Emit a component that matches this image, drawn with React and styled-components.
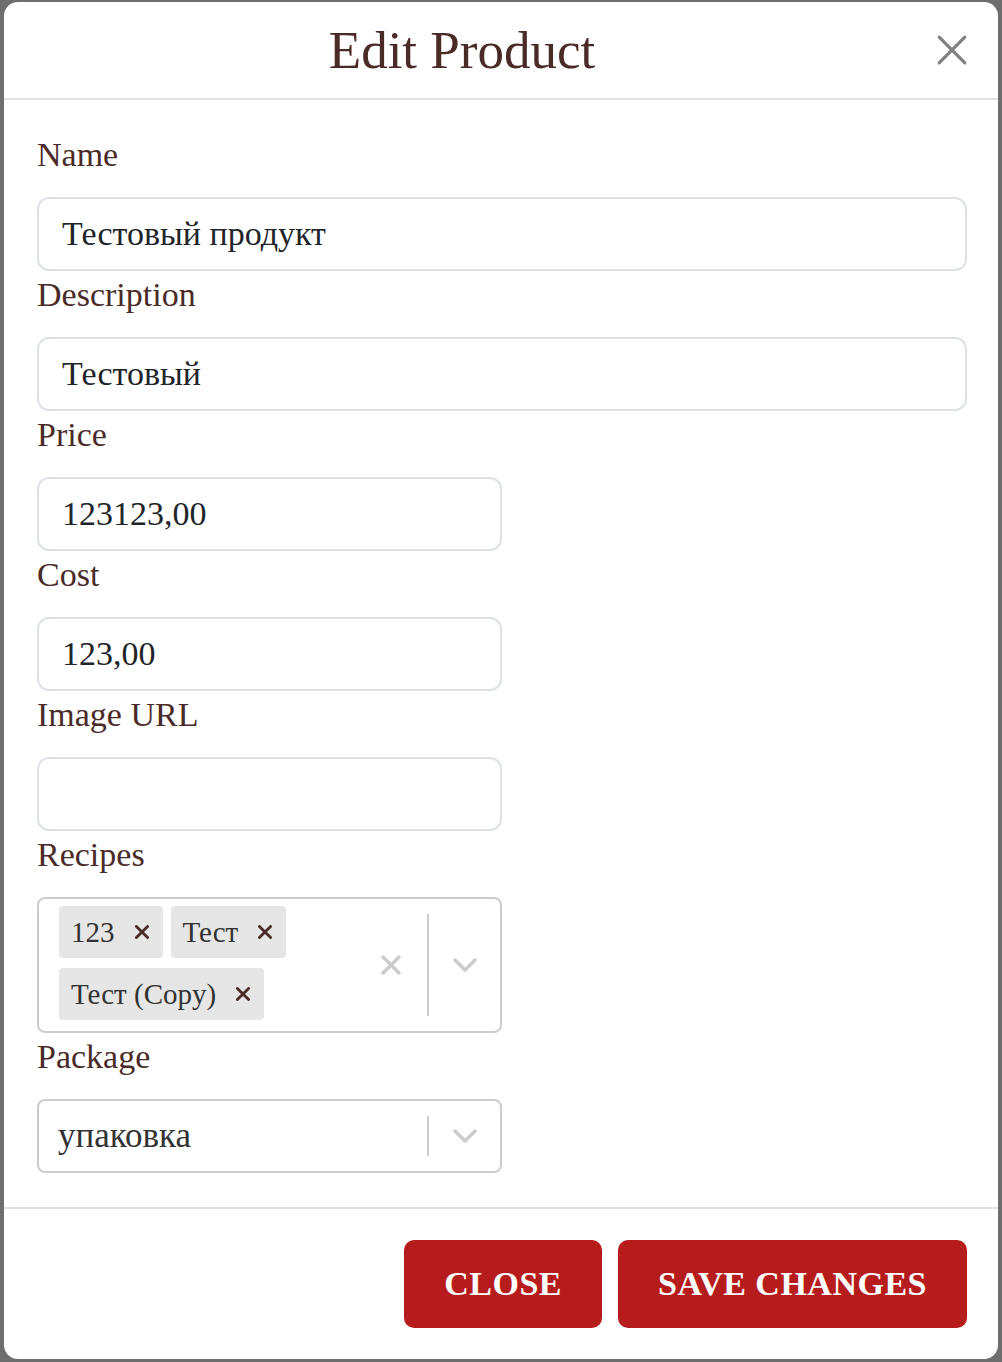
import React from "react";
import styled, { createGlobalStyle } from "styled-components";

const GlobalStyle = createGlobalStyle`
  html, body {
    margin: 0;
    padding: 0;
    background: #6e6e6e;
  }
  * {
    box-sizing: border-box;
  }
`;

const serif = `"Liberation Serif", "Times New Roman", serif`;

const Backdrop = styled.div`
  min-height: 1362px;
  padding: 2px 4px 4px 4px;
  font-family: ${serif};
`;

const Modal = styled.div`
  background: #fff;
  border-radius: 14px;
  display: flex;
  flex-direction: column;
  overflow: hidden;
`;

const Header = styled.div`
  height: 98px;
  display: flex;
  align-items: center;
  padding: 0 30px 0 32px;
  border-bottom: 2px solid #dee2e6;
`;

const Title = styled.h2`
  flex: 1;
  margin: 0;
  text-align: center;
  font-family: ${serif};
  font-weight: 400;
  font-size: 53px;
  line-height: 1;
  color: #4a2b27;
`;

const CloseIcon = styled.button`
  width: 80px;
  height: 40px;
  display: flex;
  align-items: center;
  justify-content: flex-end;
  padding: 0;
  border: none;
  background: none;
  cursor: pointer;
`;

const Body = styled.div`
  padding: 31px 31px 34px 33px;
`;

const Label = styled.label`
  display: block;
  font-size: 34px;
  line-height: 48px;
  margin-bottom: 18px;
  color: #4a2b27;
`;

const Input = styled.input`
  display: block;
  width: ${(p) => (p.$half ? "50%" : "100%")};
  height: 74px;
  padding: 0 23px;
  border: 2px solid #dee2e6;
  border-radius: 12px;
  font-family: ${serif};
  font-size: 34px;
  color: #212529;
  background: #fff;
  outline: none;
`;

const SelectBox = styled.div`
  display: flex;
  width: 50%;
  min-height: 74px;
  border: 2px solid #ccc;
  border-radius: 8px;
  background: #fff;
`;

const ValueArea = styled.div`
  flex: 1;
  display: flex;
  flex-wrap: wrap;
  align-items: center;
  padding: ${(p) => (p.$multi ? "2px 16px 6px" : "0 19px")};
`;

const SingleValue = styled.span`
  font-size: 35px;
  color: #333;
`;

const Chip = styled.div`
  display: flex;
  align-items: center;
  height: 52px;
  margin: 5px 4px;
  border-radius: 4px;
  background: #e6e6e6;
`;

const ChipLabel = styled.span`
  padding: 0 8px 0 12px;
  font-size: 29px;
  color: #333;
`;

const ChipRemove = styled.span`
  display: flex;
  align-items: center;
  height: 100%;
  padding: 0 14px 0 12px;
`;

const ClearIndicator = styled.div`
  display: flex;
  align-items: center;
  padding: 0 26px 0 16px;
`;

const Separator = styled.span`
  align-self: stretch;
  width: 2px;
  margin: 15px 0;
  background: #ccc;
`;

const DropdownIndicator = styled.div`
  display: flex;
  align-items: center;
  justify-content: center;
  width: 71px;
`;

const Footer = styled.div`
  display: flex;
  justify-content: flex-end;
  gap: 16px;
  padding: 31px 31px 31px 0;
  border-top: 2px solid #dee2e6;
`;

const Button = styled.button`
  height: 88px;
  padding: 0 40px;
  border: none;
  border-radius: 10px;
  background: #b71c1c;
  color: #fff;
  font-family: ${serif};
  font-weight: 700;
  font-size: 34px;
  letter-spacing: 0.5px;
  text-transform: uppercase;
  cursor: pointer;
`;

const Cross = ({ size, color, width }) => (
  <svg width={size} height={size} viewBox="0 0 20 20">
    <path
      d="M2 2 L18 18 M18 2 L2 18"
      stroke={color}
      strokeWidth={width}
      strokeLinecap="round"
      fill="none"
    />
  </svg>
);

const Chevron = () => (
  <svg width="24" height="16" viewBox="0 0 24 16">
    <path
      d="M2 3 L12 13 L22 3"
      stroke="#ccc"
      strokeWidth="3.5"
      strokeLinecap="round"
      strokeLinejoin="round"
      fill="none"
    />
  </svg>
);

const recipes = ["123", "Тест", "Тест (Copy)"];

function Field({ label, children }) {
  return (
    <>
      <Label>{label}</Label>
      {children}
    </>
  );
}

export default function App() {
  return (
    <Backdrop>
      <GlobalStyle />
      <Modal>
        <Header>
          <Title>Edit Product</Title>
          <CloseIcon type="button" aria-label="Close">
            <Cross size={32} color="#808080" width={2} />
          </CloseIcon>
        </Header>
        <Body>
          <Field label="Name">
            <Input defaultValue="Тестовый продукт" />
          </Field>
          <Field label="Description">
            <Input defaultValue="Тестовый" />
          </Field>
          <Field label="Price">
            <Input $half defaultValue="123123,00" />
          </Field>
          <Field label="Cost">
            <Input $half defaultValue="123,00" />
          </Field>
          <Field label="Image URL">
            <Input $half defaultValue="" />
          </Field>
          <Field label="Recipes">
            <SelectBox>
              <ValueArea $multi>
                {recipes.map((r) => (
                  <Chip key={r}>
                    <ChipLabel>{r}</ChipLabel>
                    <ChipRemove>
                      <Cross size={14} color="#4a2b27" width={4} />
                    </ChipRemove>
                  </Chip>
                ))}
              </ValueArea>
              <ClearIndicator>
                <Cross size={20} color="#ccc" width={3.5} />
              </ClearIndicator>
              <Separator />
              <DropdownIndicator>
                <Chevron />
              </DropdownIndicator>
            </SelectBox>
          </Field>
          <Field label="Package">
            <SelectBox>
              <ValueArea>
                <SingleValue>упаковка</SingleValue>
              </ValueArea>
              <Separator />
              <DropdownIndicator>
                <Chevron />
              </DropdownIndicator>
            </SelectBox>
          </Field>
        </Body>
        <Footer>
          <Button type="button">Close</Button>
          <Button type="button">Save Changes</Button>
        </Footer>
      </Modal>
    </Backdrop>
  );
}
